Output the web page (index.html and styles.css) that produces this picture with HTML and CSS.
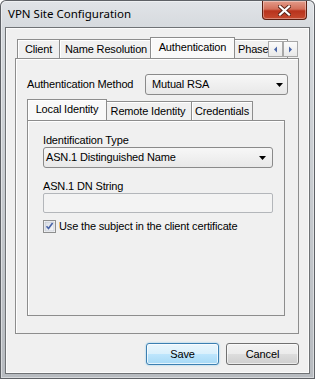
FILE: index.html
```html
<!DOCTYPE html>
<html lang="en">
<head>
    <meta charset="UTF-8">
    <meta name="viewport" content="width=device-width, initial-scale=1.0">
    <title>VPN Site Configuration</title>
    <link rel="stylesheet" href="styles.css">
</head>
<body>
    <div class="window">
        <div class="titlebar">
            <span class="title">VPN Site Configuration</span>
            <div class="close-btn">
                <svg width="13" height="11" viewBox="0 0 13 11">
                    <path d="M2 1.5 L11 9.5 M11 1.5 L2 9.5" stroke="#5a2418" stroke-width="4" stroke-linecap="square"/>
                    <path d="M2 1.5 L11 9.5 M11 1.5 L2 9.5" stroke="#fff" stroke-width="2.2" stroke-linecap="square"/>
                </svg>
            </div>
        </div>

        <div class="client">
            <div class="tabs tabs-main">
                <div class="tab-strip">
                    <div class="tab tab-client">Client</div>
                    <div class="tab tab-names">Name Resolution</div>
                    <div class="tab tab-auth active">Authentication</div>
                    <div class="tab tab-phase">Phase 1</div>
                    <div class="tab-scroll">
                        <span class="scroll-btn">
                            <svg width="5" height="7" viewBox="0 0 5 7"><path d="M4 0.5 L4 6.5 L1 3.5 Z" fill="#4a66a8"/></svg>
                        </span>
                        <span class="scroll-btn">
                            <svg width="5" height="7" viewBox="0 0 5 7"><path d="M1 0.5 L1 6.5 L4 3.5 Z" fill="#4a66a8"/></svg>
                        </span>
                    </div>
                </div>
                <div class="tab-panel">
                    <div class="field-row">
                        <span class="label">Authentication Method</span>
                        <div class="combo combo-method">
                            <span>Mutual RSA</span>
                            <svg class="combo-arrow" width="7" height="4" viewBox="0 0 7 4"><path d="M0 0 H7 L3.5 4 Z" fill="#000"/></svg>
                        </div>
                    </div>

                    <div class="tabs tabs-sub">
                        <div class="tab-strip">
                            <div class="tab tab-local active">Local Identity</div>
                            <div class="tab tab-remote">Remote Identity</div>
                            <div class="tab tab-creds">Credentials</div>
                        </div>
                        <div class="tab-panel sub-panel">
                            <div class="label">Identification Type</div>
                            <div class="combo combo-type">
                                <span>ASN.1 Distinguished Name</span>
                                <svg class="combo-arrow" width="7" height="4" viewBox="0 0 7 4"><path d="M0 0 H7 L3.5 4 Z" fill="#000"/></svg>
                            </div>
                            <div class="label label-gap">ASN.1 DN String</div>
                            <div class="text-input"></div>
                            <div class="check-row">
                                <svg class="checkbox" width="13" height="13" viewBox="0 0 13 13">
                                    <defs>
                                        <linearGradient id="cbfill" x1="0" y1="0" x2="1" y2="1">
                                            <stop offset="0" stop-color="#d6dbe3"/>
                                            <stop offset="1" stop-color="#f8f9fb"/>
                                        </linearGradient>
                                    </defs>
                                    <rect x="0.5" y="0.5" width="12" height="12" fill="#fff" stroke="#8e8f8f"/>
                                    <rect x="2" y="2" width="9" height="9" fill="url(#cbfill)" stroke="#c0c6cf" stroke-width="0.8"/>
                                    <path d="M3.5 6.3 L5.5 8.5 L9.6 3" fill="none" stroke="#4763a8" stroke-width="1.6"/>
                                </svg>
                                <span>Use the subject in the client certificate</span>
                            </div>
                        </div>
                    </div>
                </div>
            </div>

            <div class="dialog-buttons">
                <button class="btn btn-default">Save</button>
                <button class="btn">Cancel</button>
            </div>
        </div>
    </div>
</body>
</html>
```

FILE: styles.css
```css
body {
    margin: 0;
    padding: 0;
    font-family: 'Liberation Sans', Arial, sans-serif;
    font-size: 11px;
    line-height: 13px;
    letter-spacing: -0.15px;
    color: #000;
    background-color: #fff;
}

.window {
    width: 315px;
    height: 379px;
    box-sizing: border-box;
    display: flex;
    flex-direction: column;
    border-radius: 6px 6px 0 0;
    background: linear-gradient(to bottom, #e1e4e8 0, #d5d9dd 30px, #b7bbc0 100%);
    box-shadow: inset 0 0 0 1px #5e6166, inset 0 0 0 2px rgba(255,255,255,0.45);
}

.titlebar {
    height: 28px;
    flex: none;
    display: flex;
    align-items: flex-start;
    padding-left: 8px;
}

.title {
    margin-top: 6px;
    font-family: 'Noto Sans', 'Open Sans', sans-serif;
    font-size: 11.5px;
    line-height: 16px;
    letter-spacing: 0;
    color: #000;
}

.close-btn {
    margin-left: auto;
    margin-right: 8px;
    width: 45px;
    height: 19px;
    margin-top: 1px;
    box-sizing: border-box;
    border: 1px solid #5c1f12;
    border-top: none;
    border-radius: 0 0 4px 4px;
    background: linear-gradient(to bottom, #e39c8a 0, #d36f5a 45%, #b8331d 55%, #c64a2f 100%);
    box-shadow: inset 0 0 0 1px rgba(255,255,255,0.35);
    display: flex;
    align-items: center;
    justify-content: center;
}

.client {
    flex: 1;
    margin: 0 6px 6px;
    border: 1px solid #fbfbfb;
    box-shadow: 0 0 0 1px #6f7275;
    background-color: #f0f0f0;
    display: flex;
    flex-direction: column;
    padding: 8px 9px 7px 8px;
}

/* tab controls */
.tabs {
    display: flex;
    flex-direction: column;
}

.tabs-main {
    flex: 1;
}

.tab-strip {
    display: flex;
    align-items: flex-end;
    height: 21px;
    padding-left: 3px;
    position: relative;
    overflow: hidden;
    flex: none;
}

.tab {
    flex: none;
    height: 19px;
    box-sizing: border-box;
    margin-left: -1px;
    padding-top: 3px;
    border: 1px solid #8d8d8d;
    border-bottom: none;
    background-color: #f0f0f0;
    box-shadow: inset 1px 1px 0 #fff;
    text-align: center;
    white-space: nowrap;
    overflow: hidden;
}

.tab.active {
    height: 22px;
    margin-left: -3px;
    margin-right: -2px;
    margin-bottom: -1px;
    position: relative;
    z-index: 1;
    background-color: #f9f9f9;
}

.tab-client { width: 43px; }
.tab-names { width: 94px; }
.tab-auth { width: 85px; }
.tab-phase { width: 56px; text-align: left; padding-left: 5px; }

.tab-local { width: 80px; }
.tab-remote { width: 88px; }
.tab-creds { width: 62px; }

.tab-scroll {
    position: absolute;
    right: 1px;
    top: 4px;
    display: flex;
    z-index: 2;
}

.scroll-btn {
    width: 15px;
    height: 16px;
    box-sizing: border-box;
    border: 1px solid #a8a8a8;
    background: linear-gradient(to bottom, #fbfbfb, #e9e9e9);
    display: flex;
    align-items: center;
    justify-content: center;
}

.tab-panel {
    flex: 1;
    border: 1px solid #8d8d8d;
    box-shadow: inset 1px 1px 0 #fff;
    background-color: #f0f0f0;
    display: flex;
    flex-direction: column;
    padding: 15px 10px 17px 11px;
}

.field-row {
    display: flex;
    align-items: center;
}

.combo {
    height: 21px;
    box-sizing: border-box;
    border: 1px solid #8a8a8a;
    border-radius: 3px;
    background: linear-gradient(to bottom, #f7f7f7, #e8e8e8);
    display: flex;
    align-items: center;
    white-space: nowrap;
}

.combo-arrow {
    margin-left: auto;
}

.combo-method {
    margin-left: auto;
    width: 143px;
    padding: 0 4px 0 6px;
}

.tabs-sub {
    flex: 1;
    margin-top: 4px;
    margin-right: 3px;
}

.sub-panel {
    padding: 13px 11px 0 15px;
}

.combo-type {
    padding: 0 6px 0 2px;
}

.label-gap {
    margin-top: 12px;
}

.text-input {
    height: 20px;
    box-sizing: border-box;
    border: 1px solid #b3b6ba;
    border-radius: 2px;
    background-color: #f3f3f3;
}

.check-row {
    display: flex;
    align-items: center;
    gap: 3px;
    margin-top: 7px;
}

.checkbox {
    flex: none;
}

/* bottom buttons */
.dialog-buttons {
    display: flex;
    justify-content: flex-end;
    gap: 7px;
    margin-top: 9px;
    flex: none;
}

.btn {
    width: 73px;
    height: 22px;
    box-sizing: border-box;
    border: 1px solid #707070;
    border-radius: 3px;
    background: linear-gradient(to bottom, #f2f2f2 0, #ebebeb 50%, #dddddd 50%, #cfcfcf 100%);
    box-shadow: inset 0 0 0 1px rgba(255,255,255,0.6);
    font-family: 'Liberation Sans', Arial, sans-serif;
    font-size: 11px;
    letter-spacing: -0.15px;
    color: #000;
    padding: 0;
}

.btn-default {
    border-color: #3c7fb1;
    background: linear-gradient(to bottom, #eaf6fd 0, #d9f0fc 50%, #bee6fd 50%, #a7d9f5 100%);
    box-shadow: inset 0 0 0 1px rgba(255,255,255,0.7), 0 0 2px #7ec7ec;
}
```
